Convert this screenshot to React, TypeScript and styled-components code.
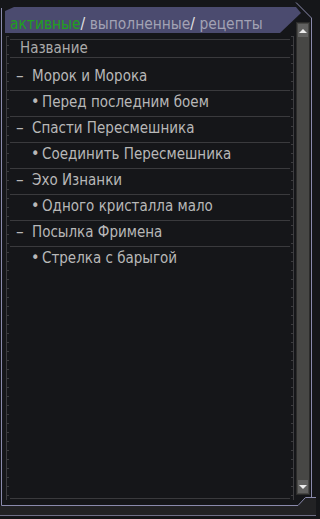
import React from 'react';
import styled, { createGlobalStyle } from 'styled-components';

const GlobalStyle = createGlobalStyle`
  html, body {
    margin: 0;
    padding: 0;
    background: #151619;
  }
  body {
    font-family: "DejaVu Sans Condensed", "DejaVu Sans", Verdana, sans-serif;
  }
`;

const Window = styled.div`
  position: relative;
  width: 316px;
  height: 519px;
  background: #151619;
  display: flex;
  flex-direction: column;
  overflow: hidden;
`;

const Frame = styled.svg`
  position: absolute;
  left: 0;
  top: 0;
  pointer-events: none;
`;

const TabBar = styled.div`
  flex: none;
  width: 296px;
  height: 26px;
  margin: 7px 0 0 5px;
  padding: 8px 0 0 5px;
  box-sizing: border-box;
  background: #4b4b6f;
  clip-path: polygon(9px 0, 291px 0, 296px 6px, 275px 26px, 0 26px, 0 4px);
  display: flex;
  align-items: flex-start;
  font-size: 15.4px;
  line-height: 18px;
  white-space: pre;
`;

const Tab = styled.span<{ $active?: boolean }>`
  color: ${(p) => (p.$active ? '#20a020' : '#a2a2b4')};
`;

const Slash = styled.span`
  color: #e4e4e4;
`;

const Body = styled.div`
  flex: none;
  height: 472px;
  display: flex;
  padding: 0 6px 0 6px;
  box-sizing: border-box;
`;

const Ruler = styled.div<{ $side: 'left' | 'right' }>`
  flex: none;
  width: 3px;
  margin: 3px 0 5px;
  box-sizing: border-box;
  border-${(p) => p.$side}: 1px solid #3c3c3f;
  background: repeating-linear-gradient(to bottom, #3c3c3f 0 1px, transparent 1px 9px);
`;

const List = styled.div`
  flex: 1;
  margin: 6px 1px 6px 1px;
  border-top: 1px solid #3a3a3d;
  border-bottom: 1px solid #3a3a3d;
  display: flex;
  flex-direction: column;
  font-size: 15px;
  color: #b8b8b8;
`;

const Header = styled.div`
  height: 18px;
  box-sizing: border-box;
  border-bottom: 1px solid #3a3a3d;
  padding-left: 10px;
  line-height: 16px;
  color: #ababab;
  margin-bottom: 6px;
`;

const Row = styled.div<{ $first?: boolean }>`
  height: 26px;
  box-sizing: border-box;
  border-top: ${(p) => (p.$first ? 'none' : '1px solid #3a3a3d')};
  line-height: ${(p) => (p.$first ? '25px' : '23px')};
  white-space: nowrap;
`;

const Marker = styled.span<{ $level: number }>`
  display: inline-block;
  margin-left: ${(p) => (p.$level ? '21px' : '6px')};
  width: ${(p) => (p.$level ? '11px' : '16px')};
  font-size: ${(p) => (p.$level ? '16px' : '17px')};
  line-height: 1;
`;

const ScrollBar = styled.div`
  flex: none;
  width: 14px;
  margin: -11px 0 10px 2px;
  padding: 1px;
  box-sizing: border-box;
  border: 1px solid #2c2c2b;
  background: #474745;
  display: flex;
  flex-direction: column;
  justify-content: space-between;
  position: relative;
  z-index: 1;
`;

const Arrow = styled.div<{ $down?: boolean }>`
  height: 13px;
  background: #616160;
  display: flex;
  align-items: center;
  justify-content: center;

  &::after {
    content: '';
    width: 0;
    height: 0;
    border-left: 4px solid transparent;
    border-right: 4px solid transparent;
    ${(p) => (p.$down ? 'border-top: 4px solid #ececec;' : 'border-bottom: 4px solid #ececec;')}
  }
`;

const BottomBand = styled.div`
  flex: none;
  height: 10px;
  margin-top: 1px;
  box-sizing: border-box;
  background: #222224;
  border-bottom: 1px solid #6e6e86;
`;

type Item = { text: string; level: number };

const items: Item[] = [
  { text: 'Морок и Морока', level: 0 },
  { text: 'Перед последним боем', level: 1 },
  { text: 'Спасти Пересмешника', level: 0 },
  { text: 'Соединить Пересмешника', level: 1 },
  { text: 'Эхо Изнанки', level: 0 },
  { text: 'Одного кристалла мало', level: 1 },
  { text: 'Посылка Фримена', level: 0 },
  { text: 'Стрелка с барыгой', level: 1 },
];

export default function App() {
  return (
    <>
      <GlobalStyle />
      <Window>
        <TabBar>
          <Tab $active>активные</Tab>
          <Slash>/ </Slash>
          <Tab>выполненные</Tab>
          <Slash>/ </Slash>
          <Tab>рецепты</Tab>
        </TabBar>
        <Body>
          <Ruler $side="left" />
          <List>
            <Header>Название</Header>
            {items.map((it, i) => (
              <Row key={it.text} $first={i === 0}>
                <Marker $level={it.level}>{it.level ? '•' : '–'}</Marker>
                {it.text}
              </Row>
            ))}
          </List>
          <Ruler $side="right" />
          <ScrollBar>
            <Arrow />
            <Arrow $down />
          </ScrollBar>
        </Body>
        <BottomBand />
        <Frame width="316" height="519" viewBox="0 0 316 519">
          <defs>
            <linearGradient id="topline" x1="0" x2="1" y1="0" y2="0">
              <stop offset="0" stopColor="#34344a" />
              <stop offset="1" stopColor="#8a8aac" />
            </linearGradient>
          </defs>
          <polygon points="298,506 305,498 316,498 316,506" fill="#222224" />
          <path d="M4 2.5 H296" stroke="url(#topline)" strokeWidth="1" fill="none" />
          <path d="M296 2.5 L311.5 18 V497" stroke="#8a8aac" strokeWidth="1" fill="none" />
          <path d="M1.5 8 V505.5 H298 L305.5 497.5 H316" stroke="#8a8aac" strokeWidth="1" fill="none" />
        </Frame>
      </Window>
    </>
  );
}
